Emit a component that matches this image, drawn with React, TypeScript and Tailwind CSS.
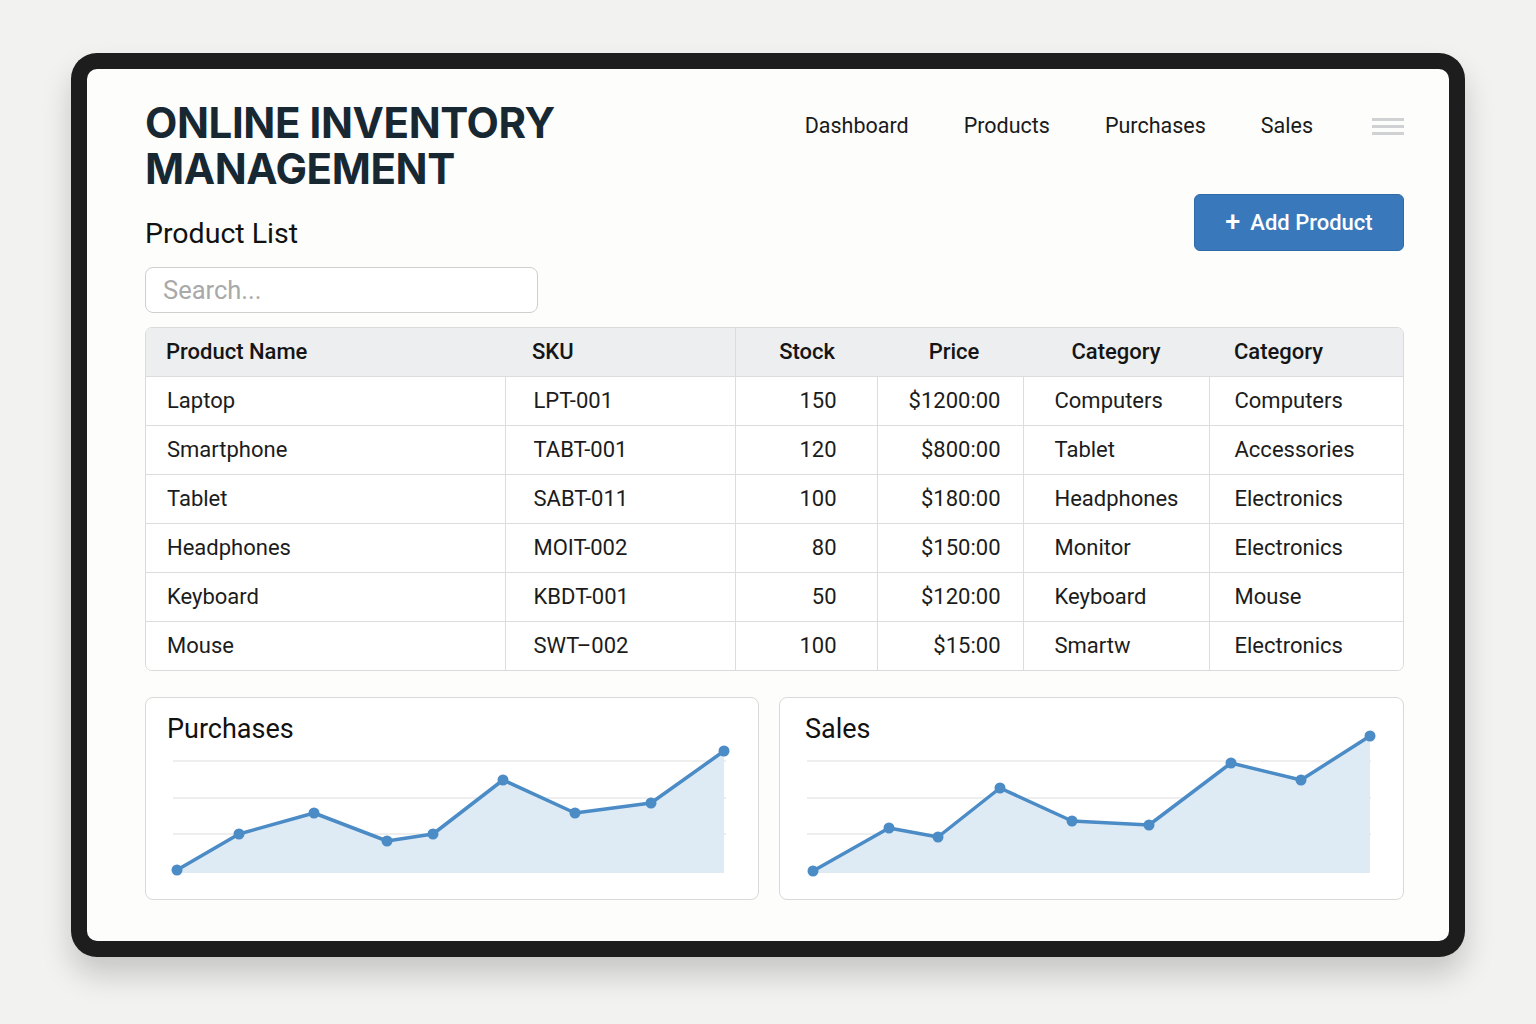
import React from "react";

const rows = [
  ["Laptop", "LPT-001", "150", "$1200:00", "Computers", "Computers"],
  ["Smartphone", "TABT-001", "120", "$800:00", "Tablet", "Accessories"],
  ["Tablet", "SABT-011", "100", "$180:00", "Headphones", "Electronics"],
  ["Headphones", "MOIT-002", "80", "$150:00", "Monitor", "Electronics"],
  ["Keyboard", "KBDT-001", "50", "$120:00", "Keyboard", "Mouse"],
  ["Mouse", "SWT\u2013002", "100", "$15:00", "Smartw", "Electronics"],
];

const purchases: [number, number][] = [
  [31, 172], [93, 136], [168, 115], [241, 143], [287, 136], [357, 82], [429, 115], [505, 105], [578, 53],
];
const sales: [number, number][] = [
  [33, 173], [109, 130], [158, 139], [220, 90], [292, 123], [369, 127], [451, 65], [521, 82], [590, 38],
];

function ChartCard({ title, points, width, right, pad }: { title: string; points: [number, number][]; width: number; right: number; pad: number }) {
  const line = points.map((p) => p.join(",")).join(" ");
  const first = points[0];
  const last = points[points.length - 1];
  const area = `${first[0]},175 ${line} ${last[0]},175`;
  return (
    <div className="relative h-[203px] rounded-lg border border-[#d9d9d9] bg-white" style={{ width }}>
      <svg className="absolute inset-0" width={width} height={203} viewBox={`0 0 ${width} 203`}>
        {[63, 100, 136].map((y) => (
          <line key={y} x1={27} x2={right} y1={y} y2={y} stroke="#dedede" strokeWidth={1} />
        ))}
        <polygon points={area} fill="#deebf5" />
        <polyline points={line} fill="none" stroke="#4b8bc6" strokeWidth={3.5} strokeLinejoin="round" />
        {points.map(([x, y], i) => (
          <circle key={i} cx={x} cy={y} r={5.5} fill="#4b8bc6" />
        ))}
      </svg>
      <h3 className="relative pt-[15px] text-[27px] leading-[32px] text-[#111]" style={{ paddingLeft: pad }}>
        {title}
      </h3>
    </div>
  );
}

export default function App() {
  const cell = "h-[49px] border-t border-[#dcdcdc] text-[22px] text-[#1c1c1c]";
  return (
    <div className="flex min-h-[1024px] w-full items-start justify-center bg-[#f2f2f1] pt-[53px]" style={{ fontFamily: "Roboto, 'Liberation Sans', sans-serif" }}>
      <div className="w-[1394px] rounded-[26px] bg-[#1d1d1d] p-[16px] shadow-[0_18px_30px_rgba(0,0,0,0.18)]">
        <div className="h-[872px] rounded-[10px] bg-[#fdfdfc] pl-[58px] pr-[45px] pt-[31px]">
          <div className="flex items-start justify-between">
            <h1 className="text-[42px] font-bold uppercase leading-[46px] tracking-[-0.4px] text-[#182833]" style={{ fontFamily: "Inter, sans-serif" }}>
              Online Inventory
              <br />
              Management
            </h1>
            <nav className="mt-[10px] flex items-center gap-[55px] text-[21.5px] text-[#1a1a1a]">
              <span>Dashboard</span>
              <span>Products</span>
              <span>Purchases</span>
              <span>Sales</span>
              <span className="ml-[4px] flex w-[32px] flex-col gap-[4px]">
                <span className="h-[3px] bg-[#cfd1d3]" />
                <span className="h-[3px] bg-[#cfd1d3]" />
                <span className="h-[3px] bg-[#cfd1d3]" />
              </span>
            </nav>
          </div>

          <div className="mt-[2px] flex items-end justify-between">
            <h2 className="text-[28.5px] leading-[34px] text-[#111]">Product List</h2>
            <button className="flex h-[57px] w-[210px] items-center justify-center gap-[10px] rounded-[6px] border border-[#2f6aa8] bg-[#3878bb] text-[22px] font-medium text-white">
              <span className="text-[27px] leading-none">+</span>
              Add Product
            </button>
          </div>

          <div className="mt-[16px] flex h-[46px] w-[393px] items-center rounded-[8px] border border-[#cfcfcf] bg-white px-[17px] text-[25.5px] text-[#a9a9a9]">
            Search...
          </div>

          <div className="mt-[14px] overflow-hidden rounded-[7px] border border-[#dadada]">
            <table className="w-full table-fixed border-collapse">
              <colgroup>
                <col className="w-[359px]" />
                <col className="w-[230px]" />
                <col className="w-[142px]" />
                <col className="w-[146px]" />
                <col className="w-[186px]" />
                <col />
              </colgroup>
              <thead>
                <tr className="h-[48px] bg-[#eceeef] text-[22px] text-[#151515]">
                  <th className="pl-[20px] text-left font-medium">Product Name</th>
                  <th className="pl-[27px] text-left font-medium">SKU</th>
                  <th className="border-l border-[#dcdcdc] pr-[42px] text-right font-medium">Stock</th>
                  <th className="pl-[8px] text-center font-medium">Price</th>
                  <th className="text-center font-medium">Category</th>
                  <th className="pl-[25px] text-left font-medium">Category</th>
                </tr>
              </thead>
              <tbody>
                {rows.map((r, i) => (
                  <tr key={i} className="bg-white">
                    <td className={`${cell} pl-[21px]`}>{r[0]}</td>
                    <td className={`${cell} border-l pl-[28px]`}>{r[1]}</td>
                    <td className={`${cell} border-l pr-[40px] text-right`}>{r[2]}</td>
                    <td className={`${cell} border-l pr-[22px] text-right`}>{r[3]}</td>
                    <td className={`${cell} border-l pl-[31px]`}>{r[4]}</td>
                    <td className={`${cell} border-l pl-[25px]`}>{r[5]}</td>
                  </tr>
                ))}
              </tbody>
            </table>
          </div>

          <div className="mt-[26px] flex gap-[20px]">
            <ChartCard title="Purchases" points={purchases} width={614} right={580} pad={21} />
            <ChartCard title="Sales" points={sales} width={625} right={591} pad={25} />
          </div>
        </div>
      </div>
    </div>
  );
}
